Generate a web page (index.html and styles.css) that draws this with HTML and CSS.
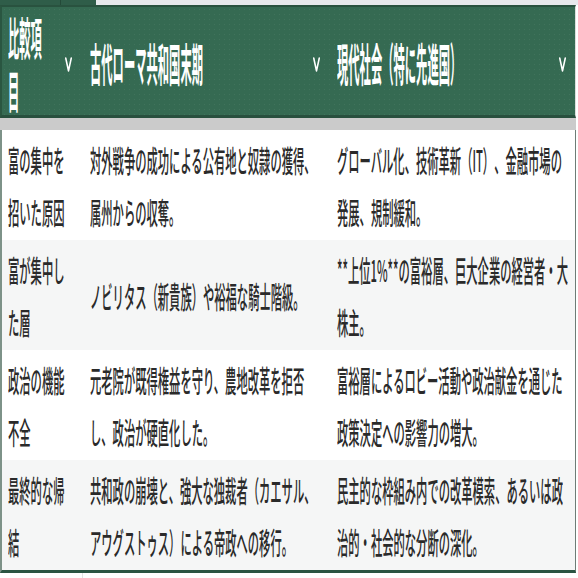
FILE: index.html
```html
<!DOCTYPE html>
<html lang="ja">
<head>
<meta charset="utf-8">
<title>比較表</title>
<link rel="stylesheet" href="styles.css">
</head>
<body>
<div class="tabs"><span class="tab tab-a"></span><span class="tab tab-b"></span></div>
<div class="sheet">
  <div class="head">
    <div class="th c1"><span class="th-text">比較項目</span><svg class="chev" viewBox="0 0 14 14" preserveAspectRatio="none"><polyline points="1.5,1 7,13 12.5,1"/></svg></div>
    <div class="th c2"><span class="th-text">古代ローマ共和国末期</span><svg class="chev" viewBox="0 0 14 14" preserveAspectRatio="none"><polyline points="1.5,1 7,13 12.5,1"/></svg></div>
    <div class="th c3"><span class="th-text">現代社会（特に先進国）</span><svg class="chev" viewBox="0 0 14 14" preserveAspectRatio="none"><polyline points="1.5,1 7,13 12.5,1"/></svg></div>
  </div>
  <div class="band"></div>
  <div class="rows">
    <div class="row">
      <div class="td c1"><span class="txt">富の集中を招いた原因</span></div>
      <div class="td c2"><span class="txt">対外戦争の成功による公有地と奴隷の獲得、属州からの収奪。</span></div>
      <div class="td c3"><span class="txt">グローバル化、技術革新（IT）、金融市場の発展、規制緩和。</span></div>
    </div>
    <div class="row alt">
      <div class="td c1"><span class="txt">富が集中した層</span></div>
      <div class="td c2"><span class="txt">ノビリタス（新貴族）や裕福な騎士階級。</span></div>
      <div class="td c3"><span class="txt">**上位1%**の富裕層、巨大企業の経営者・大株主。</span></div>
    </div>
    <div class="row">
      <div class="td c1"><span class="txt">政治の機能不全</span></div>
      <div class="td c2"><span class="txt">元老院が既得権益を守り、農地改革を拒否し、政治が硬直化した。</span></div>
      <div class="td c3"><span class="txt">富裕層によるロビー活動や政治献金を通じた政策決定への影響力の増大。</span></div>
    </div>
    <div class="row alt">
      <div class="td c1"><span class="txt">最終的な帰結</span></div>
      <div class="td c2"><span class="txt">共和政の崩壊と、強大な独裁者（カエサル、アウグストゥス）による帝政への移行。</span></div>
      <div class="td c3"><span class="txt">民主的な枠組み内での改革模索、あるいは政治的・社会的な分断の深化。</span></div>
    </div>
  </div>
  <div class="below"></div>
</div>
</body>
</html>
```
FILE: styles.css
```css
html, body {
  margin: 0;
  padding: 0;
  background: #ffffff;
  overflow: hidden;
}
body {
  width: 578px;
  height: 578px;
  font-family: "Noto Sans CJK JP", "Noto Sans", sans-serif;
  text-spacing-trim: space-all;
}
.tabs {
  display: flex;
  height: 5px;
  background: #e7e9ec;
}
.tab {
  background: #2f5d49;
}
.tab-a {
  width: 60px;
  border-right: 1px solid #244a39;
}
.tab-b {
  width: 35px;
}
.sheet {
  width: 576px;
}
.head {
  display: grid;
  grid-template-columns: 81px 247px 245px;
  height: 108px;
  background-color: #356a52;
  background-image: radial-gradient(circle, rgba(255,255,255,0.06) 0.6px, transparent 1px);
  background-size: 5px 5px;
  border-top: 2px solid #29523f;
  border-bottom: 3px solid #28503e;
  border-left: 2px solid #2a5641;
  border-right: 1px solid #d9e0dc;
}
.th {
  display: flex;
  align-items: center;
  justify-content: space-between;
  gap: 14px;
  padding: 4px 10px 0 7px;
  color: #ffffff;
}
.th.c1 { padding-left: 6px; padding-right: 11px; }
.th.c3 { padding-right: 9px; }
.th-text {
  font-size: 11.3px;
  font-weight: 700;
  line-height: 12.6px;
  transform: scaleY(4.05);
}
.chev {
  flex: none;
  width: 7px;
  height: 15px;
  margin-top: 3px;
  fill: none;
  stroke: #ffffff;
  stroke-width: 1.6px;
  vector-effect: non-scaling-stroke;
  stroke-linecap: round;
  stroke-linejoin: round;
}
.chev polyline {
  vector-effect: non-scaling-stroke;
}
.band {
  height: 12px;
  background: #cbcbcb;
}
.rows {
  border-left: 2px solid #7d9288;
  border-right: 1px solid #6d7d76;
  border-bottom: 3px solid #2a5442;
}
.row {
  display: grid;
  grid-template-columns: 81px 247px 245px;
  align-items: center;
  min-height: 110px;
  color: #2a2a2a;
  font-size: 11.3px;
  font-weight: 500;
  background: #ffffff;
}
.row.alt {
  background: #f5f6f6;
}
.td {
  padding: 0 10px 0 7px;
}
.td.c1 { padding-left: 6px; }
.td.c3 { padding-right: 5px; }
.txt {
  display: block;
  line-height: 20px;
  transform: scaleY(2.6);
}
.below {
  height: 8px;
  margin-left: 82px;
  border-left: 1px solid #e3e3e3;
}
```
